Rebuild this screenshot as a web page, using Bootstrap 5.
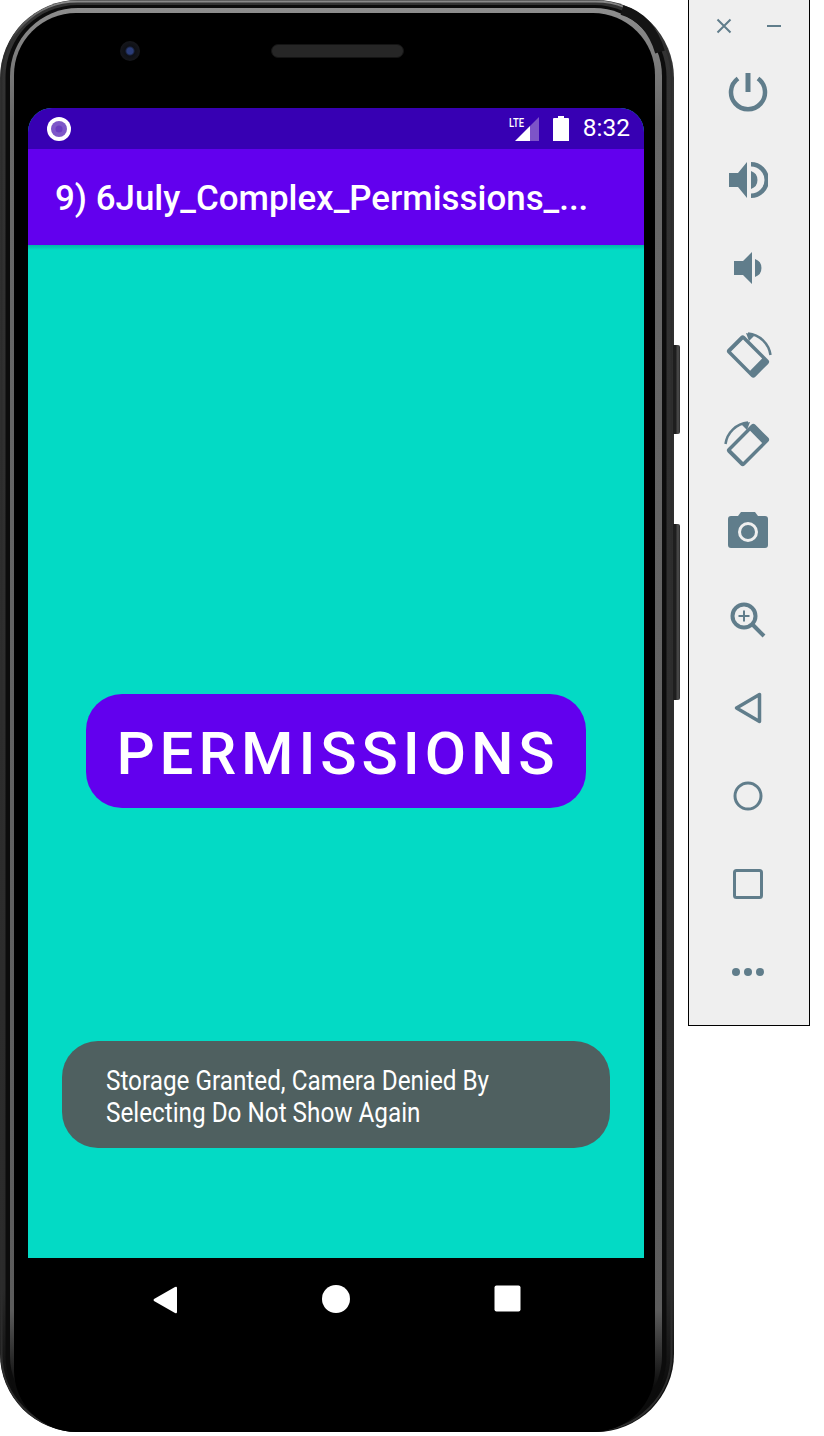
<!DOCTYPE html>
<html lang="en">
<head>
    <meta charset="UTF-8">
    <meta name="viewport" content="width=device-width, initial-scale=1">
    <title>Emulator</title>
    <link href="https://cdn.jsdelivr.net/npm/bootstrap@5.3.0/dist/css/bootstrap.min.css" rel="stylesheet">
    <style>
        body { background: #fff; font-family: Roboto, "Liberation Sans", sans-serif; width: 824px; height: 1436px; overflow: hidden; }
        .stage { width: 824px; height: 1436px; }

        /* phone */
        .phone { width: 674px; height: 1432px; border-radius: 78px; }
        .phone-art { position: absolute; inset: 0; width: 674px; height: 1432px; }
        .side-key { position: absolute; left: 673px; width: 7px; background: linear-gradient(90deg, #1e1e1e 0 3px, #454545 4px 6px, #222 7px); border-radius: 0 2px 2px 0; }
        .key-power { top: 345px; height: 89px; }
        .key-volume { top: 524px; height: 176px; }
        .bezel-top { height: 108px; }
        .bezel-bottom { height: 174px; }
        .lens { position: absolute; left: 120px; top: 41px; width: 20px; height: 20px; border-radius: 50%; background: radial-gradient(circle, #2a3c78 0 3px, #0e1016 5px, #16171c 10px); }
        .speaker { position: absolute; left: 271px; top: 44px; width: 133px; height: 14px; border-radius: 7px; background: #262626; border: 1px solid #141414; }

        /* screen */
        .screen { width: 616px; height: 1150px; margin-left: 28px; background: #03dac5; border-radius: 24px 24px 0 0; overflow: hidden; }
        .status-bar { height: 41px; background: #3700b3; color: #fff; padding: 0 14px 0 19px; font-size: 24.5px; }
        .status-icons { gap: 14px; }
        .lte-icon { margin-top: -4px; }
        .app-bar { height: 96px; background: #6200ee; color: #fff; padding: 4px 0 0 27px; font-size: 34.9px; font-weight: 500; line-height: 1; }
        .app-shadow { height: 5px; background: linear-gradient(#00b7a6, #03dac5); }
        .perm-btn { width: 500px; height: 114px; padding: 5px 0 0 4px; background: #6200ee; color: #fff; border: 0; border-radius: 36px; font-size: 60px; font-weight: 500; letter-spacing: 4.9px; line-height: 1; }
        .perm-btn:hover { background: #6200ee; color: #fff; }
        .content-area { padding-bottom: 6px; }
        .toast-msg { position: absolute; left: 34px; bottom: 110px; width: 548px; height: 107px; background: #4f6060; color: #fff; border-radius: 36px; padding: 24px 0 0 43.5px; font-size: 28px; line-height: 32px; }
        .toast-line { display: block; width: 490px; transform: scaleX(.867); transform-origin: left center; white-space: nowrap; }

        /* nav bar */
        .nav-keys { height: 82px; }
        .nav-key { position: absolute; top: 27px; }

        /* emulator toolbar */
        .tool-panel { width: 122px; height: 1026px; margin-left: 14px; background: #efefef; border: 1px solid #000; border-top: 0; }
        .tool-head { height: 48px; padding: 17px 0 0; gap: 32px; }
        .tool-slot { height: 88px; padding-right: 2px; }
        .tool-slot svg, .tool-head svg { display: block; }
        .camera-icon { margin-bottom: 4px; }
    </style>
</head>
<body>
    <div class="stage d-flex align-items-start">
        <!-- Telefono -->
        <div class="phone position-relative flex-shrink-0">
            <svg class="phone-art" viewBox="0 0 674 1432">
                <defs>
                    <linearGradient id="bodyFade" x1="0" y1="0" x2="0" y2="1">
                        <stop offset="0" stop-color="#333"/>
                        <stop offset=".9" stop-color="#2a2a2a"/>
                        <stop offset=".97" stop-color="#0c0c0c"/>
                    </linearGradient>
                    <linearGradient id="edgeFade" x1="0" y1="0" x2="0" y2="1">
                        <stop offset="0" stop-color="#8e8e8e"/>
                        <stop offset=".08" stop-color="#686868"/>
                        <stop offset=".92" stop-color="#5c5c5c"/>
                        <stop offset=".975" stop-color="#0a0a0a"/>
                    </linearGradient>
                    <linearGradient id="rimFade" x1="0" y1="0" x2="0" y2="1">
                        <stop offset="0" stop-color="#8a8a8a"/>
                        <stop offset=".03" stop-color="#2c2c2c"/>
                    </linearGradient>
                </defs>
                <rect x="0" y="0" width="674" height="1432" rx="78" fill="url(#bodyFade)"/>
                <rect x="1.5" y="1.5" width="670" height="1429" rx="76" fill="none" stroke="url(#rimFade)" stroke-width="2"/>
                <rect x="5.5" y="5" width="661" height="1423" rx="72" fill="#0c0c0c"/>
                <rect x="10" y="8" width="652" height="1416" rx="68" fill="url(#edgeFade)"/>
                <path d="M622 10Q650 18 660 52" fill="none" stroke="#141414" stroke-width="10"/>
                <rect x="14" y="13" width="641" height="1419" rx="62" fill="#000"/>
            </svg>
            <div class="side-key key-power"></div>
            <div class="side-key key-volume"></div>
            <div class="position-relative">
                <div class="bezel-top position-relative">
                    <div class="lens"></div>
                    <div class="speaker"></div>
                </div>
                <div class="screen d-flex flex-column position-relative">
                    <div class="status-bar d-flex align-items-center flex-shrink-0">
                        <svg width="24" height="24" viewBox="0 0 24 24">
                            <circle cx="12" cy="12" r="12" fill="#fff"/>
                            <circle cx="12" cy="12" r="8" fill="#7e57c8"/>
                            <circle cx="12" cy="12" r="3.5" fill="#6a3cc0"/>
                        </svg>
                        <div class="status-icons d-flex align-items-center ms-auto">
                            <svg class="lte-icon" width="30" height="29" viewBox="0 -4 30 29">
                                <path d="M30 1V25H21V10Z" fill="#7d54c8"/>
                                <path d="M6 25 21 10V25Z" fill="#fff"/>
                                <text x="0" y="11" fill="#fff" font-family="Roboto, sans-serif" font-size="13.5" font-weight="500" textLength="15" lengthAdjust="spacingAndGlyphs">LTE</text>
                            </svg>
                            <svg width="16" height="25" viewBox="0 0 16 25">
                                <path d="M5 0H11V2H15Q16 2 16 3V25H0V3Q0 2 1 2H5Z" fill="#fff"/>
                            </svg>
                            <span>8:32</span>
                        </div>
                    </div>
                    <div class="app-bar d-flex align-items-center flex-shrink-0">9) 6July_Complex_Permissions_...</div>
                    <div class="content-area flex-grow-1 d-flex flex-column">
                        <div class="app-shadow"></div>
                        <div class="flex-grow-1 d-flex align-items-center justify-content-center">
                            <button type="button" class="btn perm-btn d-flex align-items-center justify-content-center">PERMISSIONS</button>
                        </div>
                    </div>
                    <div class="toast-msg">
                        <span class="toast-line">Storage Granted, Camera Denied By</span>
                        <span class="toast-line">Selecting Do Not Show Again</span>
                    </div>
                </div>
                <div class="bezel-bottom position-relative">
                    <div class="nav-keys position-relative">
                        <svg class="nav-key" style="left:152px" width="26" height="30" viewBox="0 0 26 30"><path d="M23 2 2 14Q1 15 2 16L23 28Q25 29 25 27V3Q25 1 23 2Z" fill="#fff"/></svg>
                        <svg class="nav-key" style="left:322px" width="28" height="28" viewBox="0 0 28 28"><circle cx="14" cy="14" r="14" fill="#fff"/></svg>
                        <svg class="nav-key" style="left:494px" width="27" height="27" viewBox="0 0 27 27"><rect width="26" height="26" x=".5" y=".5" rx="2" fill="#fff"/></svg>
                    </div>
                </div>
            </div>
        </div>

        <!-- Barra del emulador -->
        <div class="tool-panel flex-shrink-0">
            <div class="tool-head d-flex justify-content-center">
                <svg width="18" height="18" viewBox="0 0 18 18"><path d="M2.5 2.5 15.5 15.5M15.5 2.5 2.5 15.5" stroke="#607d8b" stroke-width="2" fill="none"/></svg>
                <svg width="18" height="18" viewBox="0 0 18 18"><path d="M2 9H16" stroke="#607d8b" stroke-width="2" fill="none"/></svg>
            </div>
            <div class="tool-slot d-flex justify-content-center align-items-center">
                <svg width="40" height="40" viewBox="0 0 40 40"><path d="M10 6.5A17 17 0 1 0 30 6.5" fill="none" stroke="#607d8b" stroke-width="4.5"/><path d="M20 1V20" stroke="#607d8b" stroke-width="5" fill="none"/></svg>
            </div>
            <div class="tool-slot d-flex justify-content-center align-items-center">
                <svg width="40" height="40" viewBox="0 0 40 40"><path d="M1 13H10L19 2V38L10 27H1Z" fill="#607d8b"/><path d="M23 11A9.5 9.5 0 0 1 23 29Z" fill="#607d8b"/><path d="M23 2A18 18 0 0 1 23 38V33.5A13.5 13.5 0 0 0 23 6.5Z" fill="#607d8b"/></svg>
            </div>
            <div class="tool-slot d-flex justify-content-center align-items-center">
                <svg width="30" height="34" viewBox="0 0 30 34"><path d="M1 10H10L19 1V33L10 24H1Z" fill="#607d8b"/><path d="M22 8A9.5 9.5 0 0 1 22 26Z" fill="#607d8b"/></svg>
            </div>
            <div class="tool-slot d-flex justify-content-center align-items-center">
                <svg width="48" height="48" viewBox="0 0 48 48"><path transform="translate(24 24.5) rotate(-45)" fill-rule="evenodd" fill="#607d8b" d="M-9-19.5H9Q12-19.5 12-16.5V16.5Q12 19.5 9 19.5H-9Q-12 19.5-12 16.5V-16.5Q-12-19.5-9-19.5ZM-8.5-15.5V11.5H8.5V-15.5Z"/><path d="M24 1.5A25 25 0 0 1 46.5 23" fill="none" stroke="#607d8b" stroke-width="2.5"/><path d="M22 1 31 3 25 9Z" fill="#607d8b"/></svg>
            </div>
            <div class="tool-slot d-flex justify-content-center align-items-center">
                <svg width="48" height="48" viewBox="0 0 48 48"><path transform="translate(24 25) rotate(45)" fill-rule="evenodd" fill="#607d8b" d="M-9-19.5H9Q12-19.5 12-16.5V16.5Q12 19.5 9 19.5H-9Q-12 19.5-12 16.5V-16.5Q-12-19.5-9-19.5ZM-8.5-11.5V15.5H8.5V-11.5Z"/><path d="M24 2.5A25 25 0 0 0 1.5 24" fill="none" stroke="#607d8b" stroke-width="2.5"/><path d="M26 2 17 4 23 10Z" fill="#607d8b"/></svg>
            </div>
            <div class="tool-slot d-flex justify-content-center align-items-center">
                <svg class="camera-icon" width="40" height="36" viewBox="0 0 40 36"><path d="M3 4H10L13 0H27L30 4H37Q40 4 40 7V33Q40 36 37 36H3Q0 36 0 33V7Q0 4 3 4Z" fill="#607d8b"/><circle cx="20" cy="20" r="8.5" fill="#607d8b" stroke="#efefef" stroke-width="3"/></svg>
            </div>
            <div class="tool-slot d-flex justify-content-center align-items-center">
                <svg width="36" height="36" viewBox="0 0 36 36"><circle cx="14" cy="14" r="11.5" fill="none" stroke="#607d8b" stroke-width="4"/><path d="M22.5 22.5 34 34" stroke="#607d8b" stroke-width="4" fill="none"/><path d="M14 8.5V19.5M8.5 14H19.5" stroke="#607d8b" stroke-width="2" fill="none"/></svg>
            </div>
            <div class="tool-slot d-flex justify-content-center align-items-center">
                <svg width="28" height="32" viewBox="0 0 28 32"><path d="M25.5 2.5V29.5L2.5 16Z" fill="none" stroke="#607d8b" stroke-width="3.5" stroke-linejoin="round"/></svg>
            </div>
            <div class="tool-slot d-flex justify-content-center align-items-center">
                <svg width="30" height="30" viewBox="0 0 30 30"><circle cx="15" cy="15" r="13" fill="none" stroke="#607d8b" stroke-width="3"/></svg>
            </div>
            <div class="tool-slot d-flex justify-content-center align-items-center">
                <svg width="30" height="30" viewBox="0 0 30 30"><rect x="1.5" y="1.5" width="27" height="27" rx="2" fill="none" stroke="#607d8b" stroke-width="3"/></svg>
            </div>
            <div class="tool-slot d-flex justify-content-center align-items-center">
                <svg width="34" height="8" viewBox="0 0 34 8"><circle cx="5" cy="4" r="4" fill="#607d8b"/><circle cx="17" cy="4" r="4" fill="#607d8b"/><circle cx="29" cy="4" r="4" fill="#607d8b"/></svg>
            </div>
        </div>
    </div>

    <script src="https://cdn.jsdelivr.net/npm/bootstrap@5.3.0/dist/js/bootstrap.bundle.min.js"></script>
</body>
</html>
